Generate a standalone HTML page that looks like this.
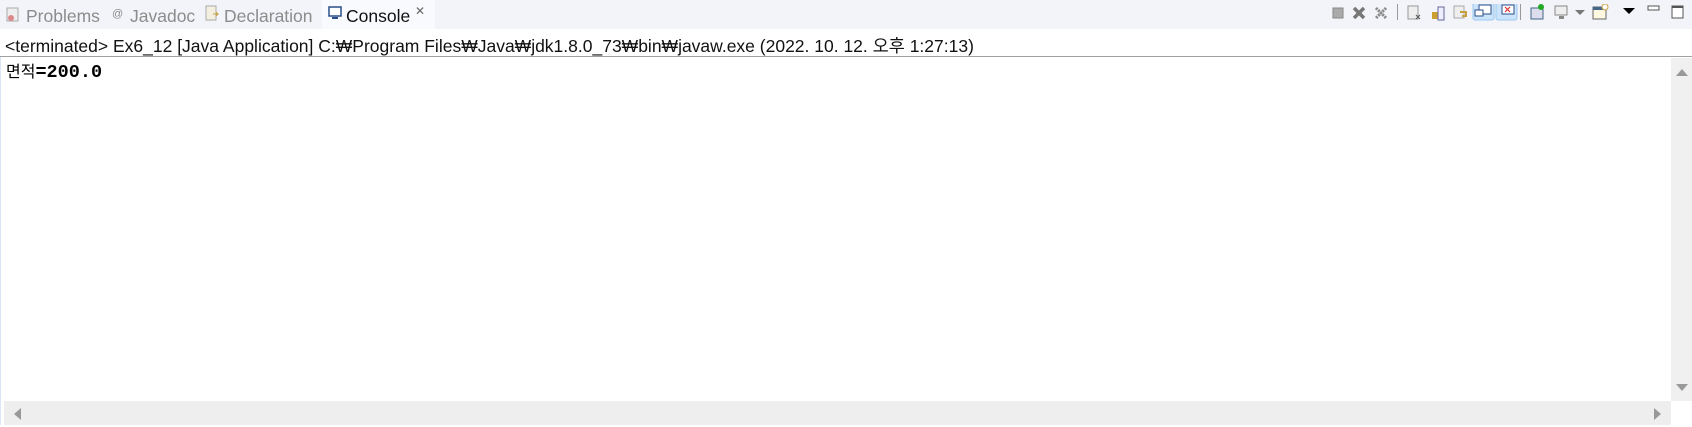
<!DOCTYPE html>
<html><head><meta charset="utf-8"><style>
body{margin:0;width:1692px;height:427px;overflow:hidden;background:#fff;font-family:"Liberation Sans","Noto Sans CJK KR",sans-serif;position:relative}
.tabbar{position:absolute;left:0;top:0;width:1692px;height:29px;background:#f3f4f9}
.tab{position:absolute;top:6px;font-size:17.5px;color:#8c8c8c;white-space:nowrap}
.ctab{position:absolute;left:322px;top:0;width:113px;height:29px;background:#f9fafd}
.status{position:absolute;left:5px;top:33px;font-size:17.5px;color:#111;white-space:nowrap}
.sep{position:absolute;left:0;top:56px;width:1692px;height:1px;background:#a0a0a0}
.out{position:absolute;left:6px;top:58px;font-size:16px;color:#000;white-space:nowrap}
.out b{font-family:"Liberation Mono",monospace;font-weight:bold;font-size:18.5px}
.vs{position:absolute;left:1671px;top:58px;width:21px;height:343px;background:#f0f0f0}
.hs{position:absolute;left:4px;top:401px;width:1667px;height:24px;background:#eeeeee}
.ico{position:absolute}
</style></head><body>
<div class="tabbar"></div>
<div class="ctab"></div>
<svg class="ico" style="left:6px;top:7px" width="14" height="16"><rect x="1" y="1" width="11" height="13" fill="#eee" stroke="#aaa"/><circle cx="5" cy="11" r="3" fill="#d88"/></svg>
<div class="tab" style="left:26px">Problems</div>
<div class="tab" style="left:112px;font-size:11px;top:8px">@</div>
<div class="tab" style="left:130px">Javadoc</div>
<svg class="ico" style="left:204px;top:5px" width="16" height="18"><rect x="2" y="1" width="10" height="14" fill="#f4f0e0" stroke="#aaa"/><path d="M9 9h5l-2 -2M14 9l-2 2" stroke="#c9a040" fill="none"/></svg>
<div class="tab" style="left:224px">Declaration</div>
<svg class="ico" style="left:328px;top:6px" width="14" height="14"><rect x="1" y="1" width="12" height="9" fill="#fff" stroke="#2a4e8a" stroke-width="1.5"/><rect x="4" y="11" width="6" height="2" fill="#2a4e8a"/></svg>
<div class="tab" style="left:346px;color:#111">Console</div>
<div class="tab" style="left:415px;top:4px;font-size:12px;color:#666">✕</div>
<svg class="ico" style="left:1330px;top:4px" width="362" height="22">
<rect x="3" y="4" width="10" height="10" fill="#aaa" stroke="#888"/>
<path d="M24 4l10 10M34 4l-10 10" stroke="#777" stroke-width="3.5"/>
<path d="M46 4l10 10M56 4l-10 10" stroke="#888" stroke-width="3" stroke-dasharray="2 1"/>
<rect x="67" y="0" width="1" height="16" fill="#999"/>
<rect x="78" y="2" width="10" height="13" fill="#eee" stroke="#999"/><path d="M86 11l4 4M90 11l-4 4" stroke="#555"/>
<rect x="102" y="8" width="8" height="7" fill="#c9a030"/><rect x="108" y="3" width="6" height="13" fill="#eef" stroke="#669"/>
<rect x="124" y="2" width="10" height="12" fill="#eee" stroke="#aaa"/><path d="M130 8h6v4h-4" stroke="#c9a040" fill="none" stroke-width="2"/>
<rect x="143" y="-2" width="21" height="18" rx="2" fill="#cce4fb" stroke="#99c8f0"/><rect x="149" y="1" width="12" height="9" fill="#fff" stroke="#2a4e8a"/><rect x="145" y="6" width="8" height="6" fill="#fff" stroke="#2a4e8a"/>
<rect x="166" y="-2" width="21" height="18" rx="2" fill="#cce4fb" stroke="#99c8f0"/><rect x="172" y="1" width="12" height="9" fill="#fff" stroke="#2a4e8a"/><path d="M175 3l5 5M180 3l-5 5" stroke="#d22"/>
<rect x="190" y="0" width="1" height="16" fill="#999"/>
<rect x="201" y="4" width="12" height="11" fill="#dde" stroke="#468"/><circle cx="211" cy="3" r="3" fill="#2a2"/>
<rect x="225" y="2" width="12" height="9" fill="#eee" stroke="#888"/><rect x="229" y="12" width="5" height="3" fill="#888"/>
<path d="M245 6h10l-5 5z" fill="#777"/>
<rect x="263" y="3" width="13" height="12" fill="#fff8e0" stroke="#666"/><rect x="263" y="3" width="13" height="3" fill="#468"/><circle cx="275" cy="3" r="3" fill="#fff" stroke="#c9a040"/>
<path d="M293 4h12l-6 6z" fill="#000"/>
<rect x="318" y="2" width="11" height="4" fill="#fff" stroke="#555"/>
<rect x="342" y="2" width="11" height="12" fill="#fff" stroke="#555"/><rect x="342" y="2" width="11" height="2" fill="#555"/>
</svg>
<div class="status">&lt;terminated&gt; Ex6_12 [Java Application] C:₩Program Files₩Java₩jdk1.8.0_73₩bin₩javaw.exe (2022. 10. 12. 오후 1:27:13)</div>
<div class="sep"></div>
<div style="position:absolute;left:0;top:57px;width:1px;height:368px;background:#dde4f5"></div>
<div class="out">면적<b>=200.0</b></div>
<div class="vs"></div>
<svg class="ico" style="left:1675px;top:67px" width="14" height="10"><path d="M1 9L7 2L13 9z" fill="#999"/></svg>
<svg class="ico" style="left:1675px;top:383px" width="14" height="10"><path d="M1 1L7 8L13 1z" fill="#999"/></svg>
<div class="hs"></div>
<svg class="ico" style="left:12px;top:407px" width="10" height="14"><path d="M9 1L2 7L9 13z" fill="#999"/></svg>
<svg class="ico" style="left:1653px;top:407px" width="10" height="14"><path d="M1 1L8 7L1 13z" fill="#999"/></svg>
</body></html>
